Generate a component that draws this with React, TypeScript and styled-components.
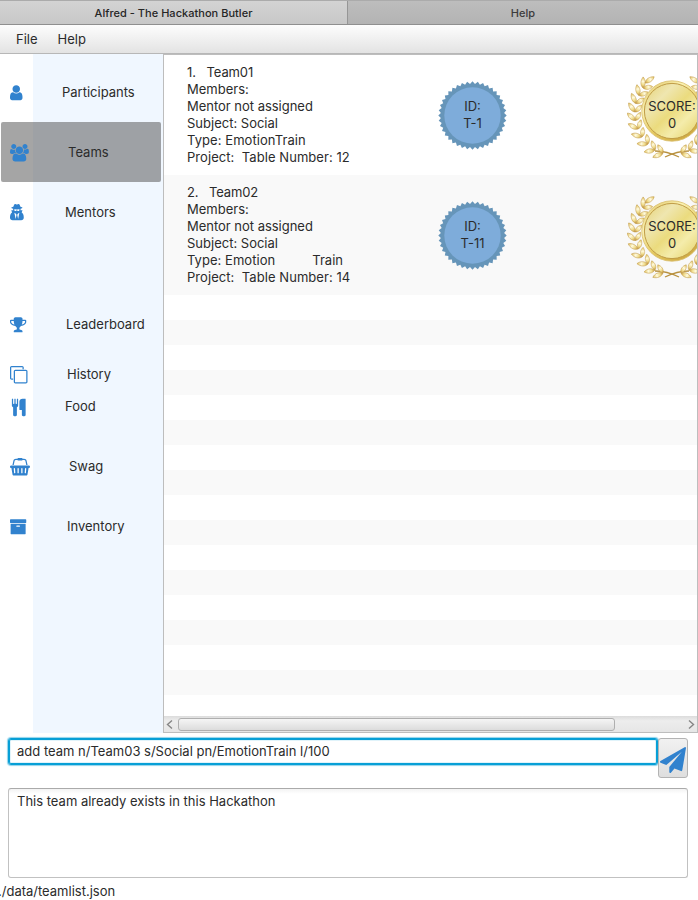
import React from "react";
import styled, { createGlobalStyle } from "styled-components";

const GlobalStyle = createGlobalStyle`
  * { box-sizing: border-box; }
  body { margin: 0; background: #fff; overflow: hidden; }
`;

const Window = styled.div`
  width: 698px;
  height: 900px;
  display: flex;
  flex-direction: column;
  overflow: hidden;
  background: #fff;
  color: #2b2b2b;
  font-family: Inter, "Liberation Sans", sans-serif;
  font-size: 13px;
  line-height: 17px;
  letter-spacing: 0;
  white-space: pre;
`;

const TabBar = styled.div`
  display: grid;
  grid-template-columns: 348px 350px;
  flex: none;
  height: 25px;
  border-top: 1px solid #ababab;
  border-bottom: 1px solid #8f8f8f;
`;

const WindowTab = styled.div<{ $active?: boolean }>`
  display: flex;
  align-items: center;
  justify-content: center;
  padding-top: 2px;
  font-size: 11px;
  font-weight: 500;
  letter-spacing: 0.03px;
  color: ${(p) => (p.$active ? "#262626" : "#3c3c3c")};
  background: ${(p) => (p.$active ? "linear-gradient(#d3d3d3, #c8c8c8)" : "linear-gradient(#bdbdbd, #b3b3b3)")};
  border-right: ${(p) => (p.$active ? "1px solid #969696" : "none")};
`;

const MenuBar = styled.div`
  display: flex;
  flex: none;
  height: 29px;
  padding: 6px 16px 0;
  gap: 20px;
  background: linear-gradient(#fdfdfd, #e3e3e3);
  border-bottom: 1px solid #b7b7b7;
`;

const MenuItem = styled.span``;

const Main = styled.div`
  display: grid;
  grid-template-columns: 163px 535px;
  flex: none;
  height: 679px;
`;

const Sidebar = styled.nav`
  padding-top: 8px;
  background: linear-gradient(to right, #fff 33px, #f0f7ff 33px);
`;

const NavItem = styled.div<{ $height?: number; $gap?: number; $active?: boolean; $indent: number }>`
  display: flex;
  align-items: center;
  height: ${(p) => p.$height ?? 60}px;
  margin: ${(p) => p.$gap ?? 0}px 2px 0 1px;
  border-radius: 2px;
  background: ${(p) => (p.$active ? "rgba(75, 75, 75, 0.5)" : "transparent")};

  svg { flex: none; overflow: visible; }
  span { margin-left: ${(p) => p.$indent}px; }
`;

const IconSlot = styled.div`
  display: flex;
  flex: none;
  width: 32px;
  padding: 1px 0 0 9px;
  color: #3182ce;
`;

const ListPane = styled.section`
  display: flex;
  flex-direction: column;
  min-width: 0;
  border: 1px solid #bdbdbd;
  overflow: hidden;
`;

const ListRows = styled.div`
  flex: 1;
  min-height: 0;
  overflow: hidden;
`;

const TeamRow = styled.article<{ $shaded?: boolean }>`
  display: flex;
  height: 120px;
  background: ${(p) => (p.$shaded ? "#f9f9f9" : "#fff")};
`;

const TeamDetails = styled.div`
  flex: none;
  width: 274px;
  padding: 9px 0 0 23px;
`;

const TeamLine = styled.div<{ $tracking: number }>`
  letter-spacing: ${(p) => p.$tracking}px;
`;

const EmptyRow = styled.div<{ $shaded: boolean }>`
  height: 25px;
  background: ${(p) => (p.$shaded ? "#f9f9f9" : "#fff")};
`;

const Badge = styled.div<{ $width: number; $left?: number }>`
  display: grid;
  flex: none;
  width: ${(p) => p.$width}px;
  height: 92px;
  margin: 15px 0 0 ${(p) => p.$left ?? 0}px;
  text-align: center;

  > * { grid-area: 1 / 1; }
`;

const BadgeText = styled.div`
  padding-top: 28px;
`;

const ScrollBar = styled.div`
  display: flex;
  align-items: center;
  flex: none;
  height: 16px;
  background: linear-gradient(#dcdcdc, #ededed 30%, #e6e6e6);
`;

const ScrollThumb = styled.div`
  width: 437px;
  height: 13px;
  margin-right: auto;
  border: 1px solid #afafaf;
  border-radius: 3px;
  background: linear-gradient(#f5f5f5, #dcdcdc);
`;

const CommandBar = styled.div`
  display: flex;
  flex: none;
  align-items: flex-start;
  padding: 5px 10px 0 8px;
  height: 55px;
`;

const CommandInput = styled.div`
  width: 650px;
  height: 27px;
  padding: 3px 7px;
  border: 1px solid #079fd6;
  border-radius: 3px;
  background: #fff;
  box-shadow: 0 0 1px 1px #8fd3ec, inset 0 0 0 1px #079fd6, inset 0 0 0 2px #e0f3fa;
  padding: 4px 8px;
`;

const SendButton = styled.button`
  display: flex;
  align-items: center;
  justify-content: center;
  width: 30px;
  height: 40px;
  padding: 4px 0 0;
  color: #3182ce;
  border: 1px solid #b3b3b3;
  border-radius: 3px;
  background: linear-gradient(#f1f1f1, #dedede);
`;

const ResultBox = styled.div`
  flex: none;
  height: 90px;
  margin: 0 10px 0 8px;
  padding: 4px 8px;
  border: 1px solid #c1c1c1;
  border-top-color: #aaa;
  border-radius: 3px;
  background: linear-gradient(#f3f3f3, #fff 5px);
`;

const StatusBar = styled.footer`
  margin: 5px 0 0 -2px;
`;

const glyphs = {
  user: { w: 1280, x: 256, d: "M1536 1399q0 109-62.5 187t-150.5 78h-854q-88 0-150.5-78t-62.5-187q0-85 8.5-160.5t31.5-152 58.5-131 94-89 134.5-34.5q131 128 313 128t313-128q76 0 134.5 34.5t94 89 58.5 131 31.5 152 8.5 160.5zm-256-887q0 159-112.5 271.5t-271.5 112.5-271.5-112.5-112.5-271.5 112.5-271.5 271.5-112.5 271.5 112.5 112.5 271.5z" },
  users: { w: 1920, x: 0, d: "M593 896q-162 5-265 128h-134q-82 0-138-40.5t-56-118.5q0-353 124-353 6 0 43.5 21t97.5 42.5 119 21.5q67 0 133-23-5 37-5 66 0 159 93 293zm1071 637q0 120-73 189.5t-194 69.5h-874q-121 0-194-69.5t-73-189.5q0-53 3.5-103.5t14-109 26.5-108.5 43-97.5 62-81 85.5-53.5 111.5-20q10 0 43 21.5t73 48 107 48 135 21.5 135-21.5 107-48 73-48 43-21.5q61 0 111.5 20t85.5 53.5 62 81 43 97.5 26.5 108.5 14 109 3.5 103.5zm-1024-1277q0 106-75 181t-181 75-181-75-75-181 75-181 181-75 181 75 75 181zm704 384q0 159-112.5 271.5t-271.5 112.5-271.5-112.5-112.5-271.5 112.5-271.5 271.5-112.5 271.5 112.5 112.5 271.5zm576 225q0 78-56 118.5t-138 40.5h-134q-103-123-265-128 93-134 93-293 0-29-5-66 66 23 133 23 59 0 119-21.5t97.5-42.5 43.5-21q124 0 124 353zm-128-609q0 106-75 181t-181 75-181-75-75-181 75-181 181-75 181 75 75 181z" },
  secret: { w: 1408, x: 192, d: "M768 1536l96-448-96-128-128-64zm256 0l128-640-128 64-96 128zm160-978q-2-4-4-6-10-8-96-8-70 0-167 19-7 2-21 2t-21-2q-97-19-167-19-86 0-96 8-2 2-4 6 2 18 4 27 2 3 7.5 6.5t7.5 10.5q2 4 7.5 20.5t7 20.5 7.5 17 8.5 17 9 14 12 13.5 14 9.5 17.5 8 20.5 4 24.5 2q36 0 59-12.5t32.5-30 14.5-34.5 11.5-29.5 17.5-12.5h12q11 0 17.5 12.5t11.5 29.5 14.5 34.5 32.5 30 59 12.5q13 0 24.5-2t20.5-4 17.5-8 14-9.5 12-13.5 9-14 8.5-17 7.5-17 7-20.5 7.5-20.5q2-7 7.5-10.5t7.5-6.5q2-9 4-27zm416 847q0 121-73 190t-194 69h-874q-121 0-194-69t-73-190q0-61 4.5-118t19-125.5 37.5-123.5 63.5-103.5 93.5-74.5l-90-220h214q-22-64-22-128 0-12 2-32-194-40-194-96 0-57 210-99 17-62 51.5-134t70.5-114q32-37 76-37 30 0 84 31t84 31 84-31 84-31q44 0 76 37 36 42 70.5 114t51.5 134q210 42 210 99 0 56-194 96 7 81-20 160h214l-82 225q63 33 107.5 96.5t65.5 143.5 29 151.5 8 148.5z" },
  trophy: { w: 1664, x: 64, d: "M522 883q-74-162-74-371h-256v96q0 78 94.5 162t235.5 113zm1078-275v-96h-256q0 209-74 371 141-29 235.5-113t94.5-162zm128-128v128q0 71-41.5 143t-112 130-173 97.5-215.5 44.5q-42 54-95 95-38 34-52.5 72.5t-14.5 89.5q0 54 30.5 91t97.5 37q75 0 133.5 45.5t58.5 114.5v64q0 14-9 23t-23 9h-832q-14 0-23-9t-9-23v-64q0-69 58.5-114.5t133.5-45.5q67 0 97.5-37t30.5-91q0-51-14.5-89.5t-52.5-72.5q-53-41-95-95-113-5-215.5-44.5t-173-97.5-112-130-41.5-143v-128q0-40 28-68t68-28h288v-96q0-66 47-113t113-47h576q66 0 113 47t47 113v96h288q40 0 68 28t28 68z" },
  clone: { w: 1792, x: 0, d: "M1664 1632v-1088q0-13-9.5-22.5t-22.5-9.5h-1088q-13 0-22.5 9.5t-9.5 22.5v1088q0 13 9.5 22.5t22.5 9.5h1088q13 0 22.5-9.5t9.5-22.5zm128-1088v1088q0 66-47 113t-113 47h-1088q-66 0-113-47t-47-113v-1088q0-66 47-113t113-47h1088q66 0 113 47t47 113zm-384-384v160h-128v-160q0-13-9.5-22.5t-22.5-9.5h-1088q-13 0-22.5 9.5t-9.5 22.5v1088q0 13 9.5 22.5t22.5 9.5h160v128h-160q-66 0-113-47t-47-113v-1088q0-66 47-113t113-47h1088q66 0 113 47t47 113z" },
  cutlery: { w: 1408, x: 0, d: "M832 128v640q0 61-35.5 111t-92.5 70v779q0 52-38 90t-90 38h-128q-52 0-90-38t-38-90v-779q-57-20-92.5-70t-35.5-111v-640q0-26 19-45t45-19 45 19 19 45v416q0 26 19 45t45 19 45-19 19-45v-416q0-26 19-45t45-19 45 19 19 45v416q0 26 19 45t45 19 45-19 19-45v-416q0-26 19-45t45-19 45 19 19 45zm768 0v1600q0 52-38 90t-90 38h-128q-52 0-90-38t-38-90v-512h-224q-13 0-22.5-9.5t-9.5-22.5v-800q0-132 94-226t226-94h256q26 0 45 19t19 45z" },
  basket: { w: 2048, x: 0, d: "M1920 768q53 0 90.5 37.5t37.5 90.5-37.5 90.5-90.5 37.5h-15l-115 662q-8 46-44 76t-82 30h-1280q-46 0-82-30t-44-76l-115-662h-15q-53 0-90.5-37.5t-37.5-90.5 37.5-90.5 90.5-37.5h1792zm-1435 800q26-2 43.5-22.5t15.5-46.5l-32-416q-2-26-22.5-43.5t-46.5-15.5-43.5 22.5-15.5 46.5l32 416q2 25 20.5 42t43.5 17h5zm411-64v-416q0-26-19-45t-45-19-45 19-19 45v416q0 26 19 45t45 19 45-19 19-45zm384 0v-416q0-26-19-45t-45-19-45 19-19 45v416q0 26 19 45t45 19 45-19 19-45zm352 5l32-416q2-26-15.5-46.5t-43.5-22.5-46.5 15.5-22.5 43.5l-32 416q-2 26 15.5 46.5t43.5 22.5h5q25 0 43.5-17t20.5-42zm-1156-1217l-93 412h-132l101-441q19-88 89-143.5t160-55.5h167q0-26 19-45t45-19h384q26 0 45 19t19 45h167q90 0 160 55.5t89 143.5l101 441h-132l-93-412q-11-44-45.5-72t-79.5-28h-167q0 26-19 45t-45 19h-384q-26 0-45-19t-19-45h-167q-45 0-79.5 28t-45.5 72z" },
  archive: { w: 1664, x: 64, d: "M1088 832q0-26-19-45t-45-19h-256q-26 0-45 19t-19 45 19 45 45 19h256q26 0 45-19t19-45zm576-192v960q0 26-19 45t-45 19h-1408q-26 0-45-19t-19-45v-960q0-26 19-45t45-19h1408q26 0 45 19t19 45zm64-448v256q0 26-19 45t-45 19h-1536q-26 0-45-19t-19-45v-256q0-26 19-45t45-19h1536q26 0 45 19t19 45z" },
  plane: { w: 1792, x: 0, d: "M1764 11q33 24 27 64l-256 1536q-5 29-32 45-14 8-31 8-11 0-24-5l-453-185-242 295q-18 23-49 23-13 0-22-4-19-7-30.5-23.5t-11.5-36.5v-349l864-1059-1069 925-395-162q-37-14-40-55-2-40 32-59l1664-960q15-9 32-9 20 0 36 11z" },
};

type GlyphName = keyof typeof glyphs;

function Glyph({ name, size = 17.5 }: { name: GlyphName; size?: number }) {
  const g = glyphs[name];
  return (
    <svg width={(g.w / 1792) * size} height={size} viewBox={`${g.x} 0 ${g.w} 1792`} fill="currentColor">
      <path d={g.d} />
    </svg>
  );
}

function Arrow({ right }: { right?: boolean }) {
  return (
    <svg width="14" height="14" viewBox="0 0 14 14" fill="none" stroke="#858585" strokeWidth="1.4">
      <path d={right ? "M6 3.5l4.5 4L6 11.5" : "M8 3.5l-4.5 4L8 11.5"} />
    </svg>
  );
}

const sealPoints = Array.from({ length: 80 }, (_, i) => {
  const radius = i % 2 ? 31.7 : 34.2;
  const angle = (i * Math.PI) / 40;
  return `${34.5 + radius * Math.sin(angle)},${45.5 - radius * Math.cos(angle)}`;
}).join(" ");

function Seal() {
  return (
    <svg width="69" height="92" viewBox="0 0 69 92">
      <polygon points={sealPoints} fill="#6695b9" />
      <circle cx="34.5" cy="45.5" r="28.2" fill="#7eacda" />
    </svg>
  );
}

/* Leaf pairs along one branch: stem position and growth direction in degrees. */
const leaves = [
  [36, 83, 195],
  [28, 80, 208],
  [21, 74, 220],
  [15, 67, 234],
  [11, 59, 246],
  [8.5, 50.5, 260],
  [8, 42, 273],
  [9, 33.5, 284],
  [12, 25.5, 297],
  [16, 18, 309],
];

const leafShape = "M0 0C2.5-3.2 7-3.6 11-1.2C8 2 3.5 2.4 0 0Z";

function Wreath() {
  return (
    <g fill="url(#leafGold)" stroke="#c29b48" strokeWidth="0.55">
      <path d="M28 81Q40 81 52 87" fill="none" stroke="#b8913f" strokeWidth="1.3" />
      {leaves.map(([x, y, heading]) => (
        <g key={heading} transform={`translate(${x} ${y})`}>
          <path d={leafShape} transform={`rotate(${heading - 32})`} />
          <path d={leafShape} transform={`rotate(${heading + 36}) scale(0.88 -0.95)`} />
        </g>
      ))}
      <path d={leafShape} transform="translate(18 13) rotate(-28)" />
    </g>
  );
}

function Medal() {
  return (
    <svg width="90" height="92" viewBox="0 0 90 92">
      <defs>
        <linearGradient id="leafGold">
          <stop stopColor="#c0913a" />
          <stop offset="0.3" stopColor="#f0dc8c" />
          <stop offset="0.6" stopColor="#fffadd" />
          <stop offset="1" stopColor="#e2c25a" />
        </linearGradient>
        <linearGradient id="rimGold" x2="0.7" y2="1">
          <stop stopColor="#dcbd58" />
          <stop offset="0.35" stopColor="#fbf3b4" />
          <stop offset="0.65" stopColor="#e6cb62" />
          <stop offset="1" stopColor="#cda840" />
        </linearGradient>
        <linearGradient id="faceGold" x2="1" y2="1">
          <stop stopColor="#e6d272" />
          <stop offset="0.28" stopColor="#efe6b0" />
          <stop offset="0.5" stopColor="#ebdb7e" />
          <stop offset="0.7" stopColor="#f4ecab" />
          <stop offset="1" stopColor="#e4d062" />
        </linearGradient>
      </defs>
      <Wreath />
      <g transform="translate(90 0) scale(-1 1)"><Wreath /></g>
      <circle cx="45" cy="41" r="30.2" fill="url(#rimGold)" stroke="#dcc376" strokeWidth="0.9" />
      <circle cx="45" cy="41" r="27.6" fill="url(#faceGold)" stroke="#c09c46" strokeWidth="1" />
    </svg>
  );
}

const navigation: { icon: GlyphName; label: string; indent: number; height?: number; gap?: number; active?: boolean }[] = [
  { icon: "user", label: "Participants", indent: 29 },
  { icon: "users", label: "Teams", indent: 35, active: true },
  { icon: "secret", label: "Mentors", indent: 32 },
  { icon: "trophy", label: "Leaderboard", indent: 33, gap: 52 },
  { icon: "clone", label: "History", indent: 34, height: 40 },
  { icon: "cutlery", label: "Food", indent: 32, height: 24 },
  { icon: "basket", label: "Swag", indent: 36, gap: 18 },
  { icon: "archive", label: "Inventory", indent: 34 },
];

type Line = [text: string, tracking: number];

const teams: { lines: Line[]; id: string; score: number }[] = [
  {
    lines: [["1.   Team01", -0.1], ["Members:", 0], ["Mentor not assigned", -0.02], ["Subject: Social", 0], ["Type: EmotionTrain", 0.07], ["Project:  Table Number: 12", 0.06]],
    id: "T-1",
    score: 0,
  },
  {
    lines: [["2.   Team02", -0.14], ["Members:", 0], ["Mentor not assigned", -0.02], ["Subject: Social", 0], ["Type: Emotion          Train", 0.04], ["Project:  Table Number: 14", 0.06]],
    id: "T-11",
    score: 0,
  },
];

export default function App() {
  return (
    <Window>
      <GlobalStyle />
      <TabBar>
        <WindowTab $active>Alfred - The Hackathon Butler</WindowTab>
        <WindowTab>Help</WindowTab>
      </TabBar>
      <MenuBar>
        <MenuItem>File</MenuItem>
        <MenuItem>Help</MenuItem>
      </MenuBar>
      <Main>
        <Sidebar>
          {navigation.map((item) => (
            <NavItem key={item.label} $height={item.height} $gap={item.gap} $active={item.active} $indent={item.indent}>
              <IconSlot><Glyph name={item.icon} /></IconSlot>
              <span>{item.label}</span>
            </NavItem>
          ))}
        </Sidebar>
        <ListPane>
          <ListRows>
            {teams.map((team, i) => (
              <TeamRow key={team.id} $shaded={i % 2 === 1}>
                <TeamDetails>
                  {team.lines.map(([text, tracking]) => <TeamLine key={text} $tracking={tracking}>{text}</TeamLine>)}
                </TeamDetails>
                <Badge $width={69}>
                  <Seal />
                  <BadgeText>ID:{"\n"}{team.id}</BadgeText>
                </Badge>
                <Badge $width={90} $left={120}>
                  <Medal />
                  <BadgeText>SCORE:{"\n"}{team.score}</BadgeText>
                </Badge>
              </TeamRow>
            ))}
            {Array.from({ length: 17 }, (_, i) => <EmptyRow key={i} $shaded={i % 2 === 1} />)}
          </ListRows>
          <ScrollBar>
            <Arrow />
            <ScrollThumb />
            <Arrow right />
          </ScrollBar>
        </ListPane>
      </Main>
      <CommandBar>
        <CommandInput>add team n/Team03 s/Social pn/EmotionTrain l/100</CommandInput>
        <SendButton aria-label="Send"><Glyph name="plane" size={26} /></SendButton>
      </CommandBar>
      <ResultBox>This team already exists in this Hackathon</ResultBox>
      <StatusBar>./data/teamlist.json</StatusBar>
    </Window>
  );
}
